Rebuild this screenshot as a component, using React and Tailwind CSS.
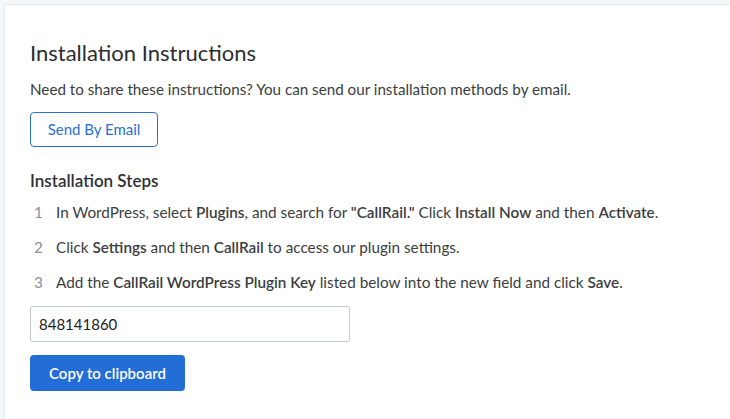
import React from "react";

const steps = [
  <>In WordPress, select <b className="font-semibold">Plugins</b>, and search for <b className="font-semibold">"CallRail."</b> Click <b className="font-semibold">Install Now</b> and then <b className="font-semibold">Activate</b>.</>,
  <>Click <b className="font-semibold">Settings</b> and then <b className="font-semibold">CallRail</b> to access our plugin settings.</>,
  <>Add the <b className="font-semibold">CallRail WordPress Plugin Key</b> listed below into the new field and click <b className="font-semibold">Save</b>.</>,
];

export default function App() {
  return (
    <div className="min-h-screen bg-[#f6f7f9] pt-[4px] pl-[4px] font-['Lato',sans-serif]">
      <div className="min-h-[420px] bg-white border border-r-0 border-[#e4e7ec] rounded-tl-[3px] pl-[25px] pt-[34px] pb-8 text-[#3b3d40]">
        <h1 className="text-[22px] leading-[28px] text-[#2c2e31]">Installation Instructions</h1>
        <p className="mt-[12px] text-[15.2px] leading-[20px]">
          Need to share these instructions? You can send our installation methods by email.
        </p>
        <button className="mt-[13px] block h-[35px] w-[128px] rounded-[4px] border border-[#2a6fd4] text-[15px] text-[#2a6fd4] bg-white">
          Send By Email
        </button>
        <h2 className="mt-[23px] text-[17px] leading-[22px] font-semibold text-[#2f3134]">Installation Steps</h2>
        <ol className="mt-[10px] flex flex-col gap-[15px] text-[15.3px] leading-[20px]">
          {steps.map((s, i) => (
            <li key={i} className="flex">
              <span className="w-[26px] pl-[4px] text-[#8b9099]">{i + 1}</span>
              <span>{s}</span>
            </li>
          ))}
        </ol>
        <input
          readOnly
          value="848141860"
          className="mt-[14px] block h-[36px] w-[320px] border border-[#c6cad1] rounded-[2px] px-[8px] text-[15px] text-[#1f2023] outline-none"
        />
        <button className="mt-[13px] block h-[36px] w-[155px] rounded-[4px] bg-[#236dd6] text-white text-[15px] font-semibold">
          Copy to clipboard
        </button>
      </div>
    </div>
  );
}
